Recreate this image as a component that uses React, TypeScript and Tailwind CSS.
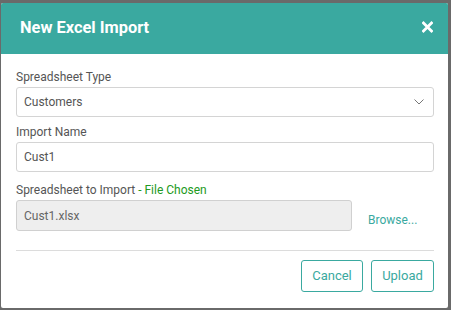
const teal = "#3aa9a0";

function Label({ children }: { children: React.ReactNode }) {
  return (
    <div className="text-[12px] leading-[16px] text-[#555] mb-[2px]">{children}</div>
  );
}

export default function App() {
  return (
    <div
      className="w-[451px] h-[310px] bg-[#6a6a6a] pt-[3px] pl-[1px] pr-[3px] pb-[2px]"
      style={{ fontFamily: "Roboto, 'Liberation Sans', sans-serif" }}
    >
      <div className="h-full bg-white rounded-[2px] flex flex-col overflow-hidden">
        <div className="h-[51px] bg-[#3aa9a0] flex items-center justify-between pl-[19px] pr-[15px] shrink-0">
          <h1 className="text-[16.4px] font-bold text-white leading-none">New Excel Import</h1>
          <svg width="11" height="12" viewBox="0 0 11 12" className="-mt-[3px]">
            <path d="M1.5 2 L9.5 10 M9.5 2 L1.5 10" stroke="white" strokeWidth="2.8" strokeLinecap="square" />
          </svg>
        </div>

        <div className="pl-[15px] pr-[14px] pt-[15px] flex flex-col">
          <Label>Spreadsheet Type</Label>
          <div className="h-[30px] border border-[#d4d4d4] rounded-[3px] flex items-center justify-between pl-[7px] pr-[9px]">
            <span className="text-[12px] text-[#555]">Customers</span>
            <svg width="10" height="6" viewBox="0 0 10 6">
              <path d="M0.5 0.5 L5 5 L9.5 0.5" fill="none" stroke="#777" strokeWidth="1" />
            </svg>
          </div>

          <div className="mt-[7px]">
            <Label>Import Name</Label>
            <div className="h-[30px] border border-[#d4d4d4] rounded-[3px] flex items-center pl-[7px]">
              <span className="text-[12px] text-[#555]">Cust1</span>
            </div>
          </div>

          <div className="mt-[10px]">
            <Label>
              Spreadsheet to Import <span className="text-[#229a22]">- File Chosen</span>
            </Label>
            <div className="flex items-start">
              <div className="w-[336px] h-[31px] bg-[#eeeeee] border border-[#d0d0d0] rounded-[3px] flex items-center pl-[7px]">
                <span className="text-[12px] text-[#666]">Cust1.xlsx</span>
              </div>
              <span className="ml-[16px] pt-[10px] text-[12px] leading-[20px]" style={{ color: teal }}>
                Browse...
              </span>
            </div>
          </div>

          <div className="mt-[19px] border-t border-[#dcdcdc]" />

          <div className="flex justify-end gap-[8px] mt-[9px]">
            <button className="w-[62px] h-[32px] border border-[#3aa9a0] rounded-[3px] text-[13px] text-[#3aa9a0] bg-white">
              Cancel
            </button>
            <button className="w-[63px] h-[32px] border border-[#3aa9a0] rounded-[3px] text-[13px] text-[#3aa9a0] bg-white">
              Upload
            </button>
          </div>
        </div>
      </div>
    </div>
  );
}
